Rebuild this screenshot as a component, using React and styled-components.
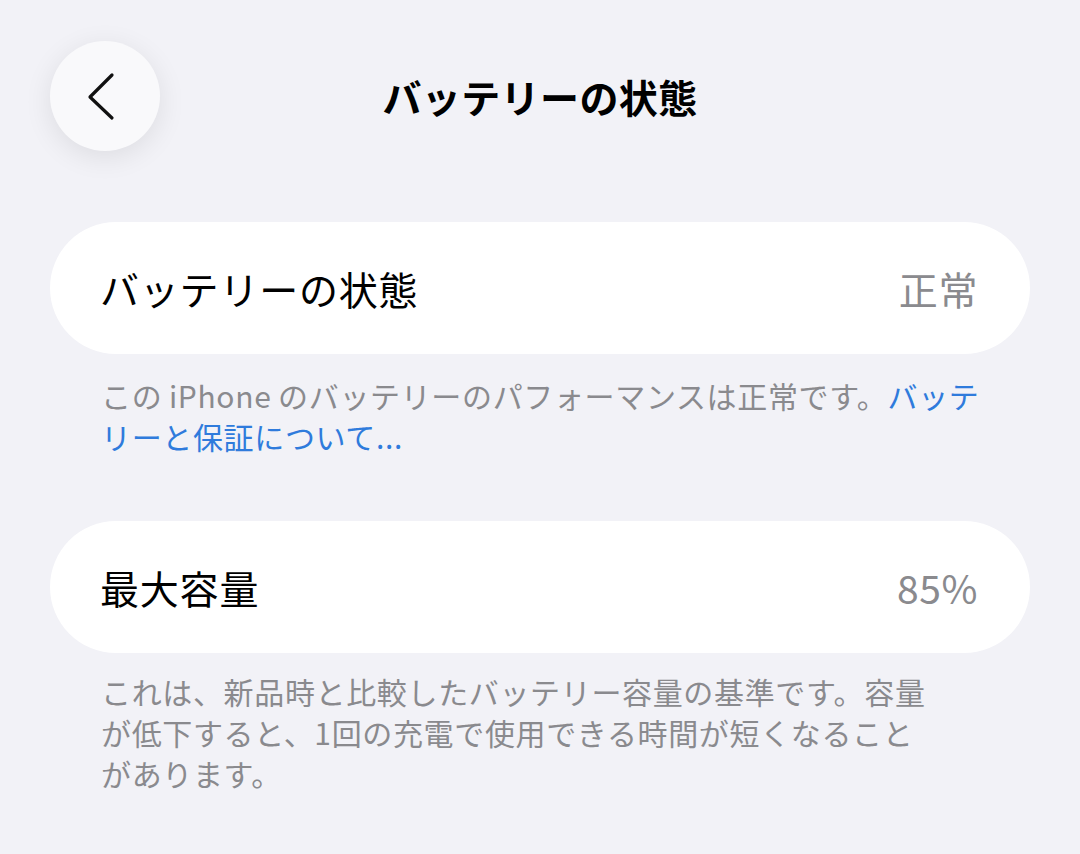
import React from "react";
import styled, { createGlobalStyle } from "styled-components";

const GlobalStyle = createGlobalStyle`
    html, body {
        margin: 0;
        padding: 0;
        background: #f2f2f7;
    }
    body {
        font-family: "Noto Sans CJK JP", "Noto Sans", sans-serif;
        color: #000;
    }
`;

const Page = styled.div`
    width: 1080px;
    height: 854px;
    background: #f2f2f7;
    display: flex;
    flex-direction: column;
    overflow: hidden;
`;

const Header = styled.div`
    display: grid;
    grid-template-columns: 110px 1fr 110px;
    align-items: center;
    padding: 41px 50px 0;
    height: 110px;
`;

const BackButton = styled.button`
    width: 110px;
    height: 110px;
    border-radius: 50%;
    border: none;
    padding: 0;
    background: #f9f9fb;
    box-shadow: 0 6px 28px rgba(0, 0, 0, 0.09);
    display: flex;
    align-items: center;
    justify-content: center;
`;

const Title = styled.h1`
    margin: 0;
    text-align: center;
    font-size: 39px;
    font-weight: 700;
    letter-spacing: 0.4px;
`;

const Card = styled.div`
    margin: ${(p) => p.$top}px 50px 0;
    height: 132px;
    border-radius: 66px;
    background: #fff;
    display: flex;
    align-items: center;
    justify-content: space-between;
    padding: 0 52px 0 50px;
    box-sizing: border-box;
`;

const Label = styled.span`
    font-size: 39px;
    font-weight: 400;
    letter-spacing: 0.8px;
`;

const Value = styled.span`
    font-size: 39px;
    color: #8a8a8e;
    letter-spacing: 0.6px;
`;

const Footer = styled.p`
    margin: ${(p) => p.$top}px 0 0;
    padding: 0 90px 0 101px;
    font-size: 30px;
    line-height: 41px;
    letter-spacing: 0.65px;
    color: #8a8a8e;
`;

const Link = styled.span`
    color: #2f7bdc;
`;

const Chevron = () => (
    <svg width="110" height="110" viewBox="0 0 110 110">
        <path
            d="M62 34 L40 56 L62 77"
            fill="none"
            stroke="#111"
            strokeWidth="3.2"
            strokeLinecap="round"
            strokeLinejoin="round"
        />
    </svg>
);

const App = () => {
    return (
        <>
            <GlobalStyle />
            <Page>
                <Header>
                    <BackButton aria-label="戻る">
                        <Chevron />
                    </BackButton>
                    <Title>バッテリーの状態</Title>
                    <span />
                </Header>

                <Card $top={71}>
                    <Label>バッテリーの状態</Label>
                    <Value>正常</Value>
                </Card>
                <Footer $top={21}>
                    この{"\u2009"}iPhone{"\u2009"}のバッテリーのパフォーマンスは正常です。<Link>バッテ<br />リーと保証について...</Link>
                </Footer>

                <Card $top={64}>
                    <Label>最大容量</Label>
                    <Value>85%</Value>
                </Card>
                <Footer $top={18}>
                    これは、新品時と比較したバッテリー容量の基準です。容量<br />
                    が低下すると、1回の充電で使用できる時間が短くなること<br />
                    があります。
                </Footer>
            </Page>
        </>
    );
};

export default App;
